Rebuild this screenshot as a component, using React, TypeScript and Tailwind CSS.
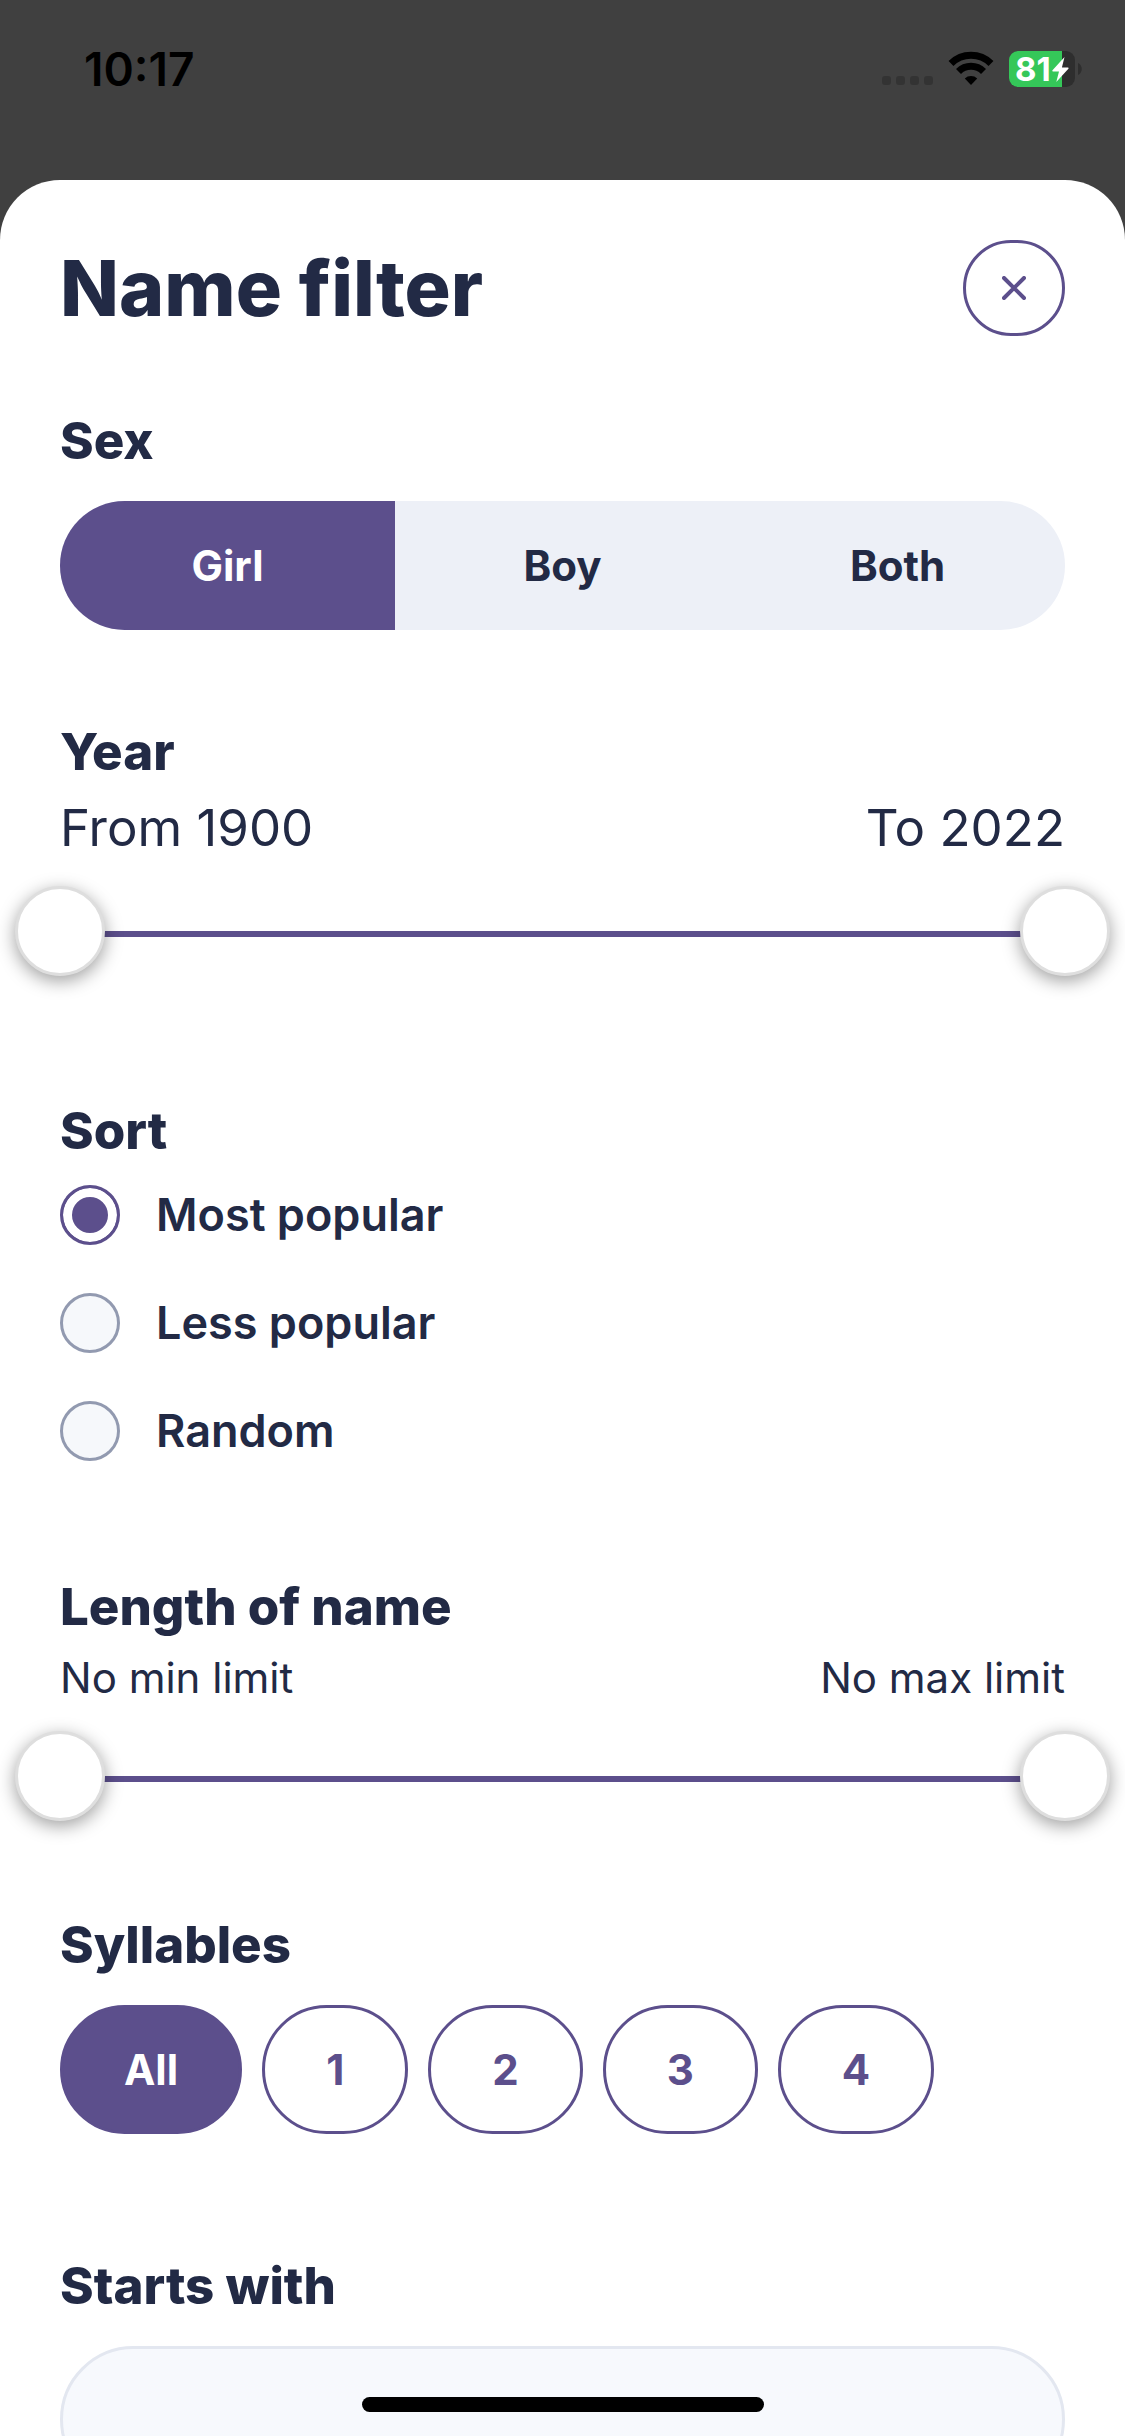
import { useState } from 'react'
import type { ReactNode } from 'react'

const SEXES = ['Girl', 'Boy', 'Both']
const SORTS = ['Most popular', 'Less popular', 'Random']
const SYLLABLES = ['All', '1', '2', '3', '4']

const YEAR_MIN = 1900
const YEAR_MAX = 2022
const LENGTH_MIN = 1
const LENGTH_MAX = 15

export default function App() {
  const [sex, setSex] = useState('Girl')
  const [sort, setSort] = useState('Most popular')
  const [syllables, setSyllables] = useState('All')
  const [years, setYears] = useState<[number, number]>([YEAR_MIN, YEAR_MAX])
  const [lengths, setLengths] = useState<[number, number]>([LENGTH_MIN, LENGTH_MAX])

  return (
    <div className="relative flex h-screen flex-col overflow-hidden bg-[#404040] font-['Inter',sans-serif] text-[#222a45]">
      <StatusBar />

      <main className="flex-1 overflow-y-auto rounded-t-[60px] bg-white px-[60px] pt-[60px] [scrollbar-width:none]">
        <header className="flex items-center justify-between">
          <h1 className="text-[77px] leading-[96px] font-extrabold">Name filter</h1>
          <button
            type="button"
            aria-label="Close"
            className="flex h-[96px] w-[102px] items-center justify-center rounded-full border-3 border-[#5c4f8c] text-[#5c4f8c]"
          >
            <svg width="24" height="24" viewBox="0 0 24 24" fill="none" stroke="currentColor" strokeWidth="4" strokeLinecap="round">
              <path d="M2 2l20 20M22 2L2 22" />
            </svg>
          </button>
        </header>

        <section className="mt-[75px]">
          <Heading>Sex</Heading>
          <div className="mt-[30px] flex h-[129px] overflow-hidden rounded-full bg-[#edf0f7]">
            {SEXES.map(s => (
              <button
                key={s}
                type="button"
                aria-pressed={sex === s}
                onClick={() => setSex(s)}
                className={`flex-1 text-[42px] leading-[50px] font-bold ${sex === s ? 'bg-[#5c4f8c] text-white' : ''}`}
              >
                {s}
              </button>
            ))}
          </div>
        </section>

        <section className="mt-[92px]">
          <Heading>Year</Heading>
          <div className="mt-4 flex justify-between text-[51px] leading-[60px]">
            <label htmlFor="year-from">From {years[0]}</label>
            <label htmlFor="year-to">To {years[1]}</label>
          </div>
          <RangeSlider ids={['year-from', 'year-to']} min={YEAR_MIN} max={YEAR_MAX} value={years} onChange={setYears} />
        </section>

        <section className="mt-[125px]">
          <Heading>Sort</Heading>
          <div className="mt-6 flex flex-col items-start gap-12">
            {SORTS.map(s => (
              <label key={s} className="flex h-[60px] items-center gap-9 text-[45px] leading-[60px] font-semibold">
                <input
                  type="radio"
                  name="sort"
                  checked={sort === s}
                  onChange={() => setSort(s)}
                  className="size-[60px] appearance-none rounded-full border-3 border-[#929ab0] bg-[#f6f8fb] checked:border-[#5c4f8c] checked:bg-[#5c4f8c] checked:shadow-[inset_0_0_0_9px_#fff]"
                />
                {s}
              </label>
            ))}
          </div>
        </section>

        <section className="mt-[116px]">
          <Heading>Length of name</Heading>
          <div className="mt-4 flex justify-between text-[42px] leading-[50px]">
            <label htmlFor="length-min">{lengths[0] === LENGTH_MIN ? 'No min limit' : `Min ${lengths[0]}`}</label>
            <label htmlFor="length-max">{lengths[1] === LENGTH_MAX ? 'No max limit' : `Max ${lengths[1]}`}</label>
          </div>
          <RangeSlider ids={['length-min', 'length-max']} min={LENGTH_MIN} max={LENGTH_MAX} value={lengths} onChange={setLengths} />
        </section>

        <section className="mt-[94px]">
          <Heading>Syllables</Heading>
          <div className="mt-[30px] flex gap-5">
            {SYLLABLES.map(s => (
              <button
                key={s}
                type="button"
                aria-pressed={syllables === s}
                onClick={() => setSyllables(s)}
                className={`h-[129px] rounded-full border-3 border-[#5c4f8c] px-[61px] text-[42px] leading-[50px] font-bold ${syllables === s ? 'bg-[#5c4f8c] text-white' : 'text-[#5c4f8c]'}`}
              >
                {s}
              </button>
            ))}
          </div>
        </section>

        <section className="mt-[122px] pb-24">
          <label htmlFor="starts-with" className="block text-[51px] leading-[60px] font-extrabold">Starts with</label>
          <input
            id="starts-with"
            type="text"
            className="mt-[30px] block h-[147px] w-full rounded-full border-3 border-[#e3e7f0] bg-[#f7f9fd] px-[60px] text-[45px] outline-none"
          />
        </section>
      </main>

      {/* home indicator */}
      <div className="absolute bottom-6 left-1/2 h-[15px] w-[402px] -translate-x-1/2 rounded-full bg-black" />
    </div>
  )
}

function Heading({ children }: { children: ReactNode }) {
  return <h2 className="text-[51px] leading-[60px] font-extrabold">{children}</h2>
}

const THUMB =
  'pointer-events-none absolute inset-y-0 -left-[45px] m-0 h-[90px] w-[calc(100%+90px)] appearance-none bg-transparent outline-none [&::-webkit-slider-thumb]:pointer-events-auto [&::-webkit-slider-thumb]:size-[90px] [&::-webkit-slider-thumb]:appearance-none [&::-webkit-slider-thumb]:rounded-full [&::-webkit-slider-thumb]:border-3 [&::-webkit-slider-thumb]:border-[#dedede] [&::-webkit-slider-thumb]:bg-white [&::-webkit-slider-thumb]:shadow-[0_5px_18px_rgba(0,0,0,0.38)]'

// Two native range inputs share one track, only the thumbs take the pointer
function RangeSlider({ ids, min, max, value, onChange }: {
  ids: [string, string]
  min: number
  max: number
  value: [number, number]
  onChange: (v: [number, number]) => void
}) {
  const pct = (n: number) => ((n - min) / (max - min)) * 100
  return (
    <div className="relative mt-7 h-[90px]">
      <div className="absolute inset-x-0 top-1/2 h-[6px] bg-[#edf0f7]" />
      <div
        className="absolute top-1/2 h-[6px] bg-[#5c4f8c]"
        style={{ left: `${pct(value[0])}%`, right: `${100 - pct(value[1])}%` }}
      />
      <input
        id={ids[0]}
        type="range"
        min={min}
        max={max}
        value={value[0]}
        onChange={e => onChange([Math.min(Number(e.target.value), value[1]), value[1]])}
        className={THUMB}
      />
      <input
        id={ids[1]}
        type="range"
        min={min}
        max={max}
        value={value[1]}
        onChange={e => onChange([value[0], Math.max(Number(e.target.value), value[0])])}
        className={THUMB}
      />
    </div>
  )
}

function StatusBar() {
  return (
    <div className="flex h-[180px] shrink-0 items-start justify-between pt-[42px] pr-[43px] pl-[84px] text-black">
      <span className="text-[46px] leading-[54px] font-semibold">10:17</span>
      <div className="flex h-[54px] items-center">
        <svg width="51" height="36" viewBox="0 0 51 36" fill="#333333">
          <rect x="0" y="25" width="9" height="9" rx="3" />
          <rect x="14" y="25" width="9" height="9" rx="3" />
          <rect x="28" y="25" width="9" height="9" rx="3" />
          <rect x="42" y="25" width="9" height="9" rx="3" />
        </svg>
        <svg className="ml-[15px]" width="46" height="36" viewBox="0 0 46 36" fill="none" stroke="currentColor">
          <path d="M3 12.5a28.500 28.500 0 0 1 40 0" strokeWidth="7" />
          <path d="M10.500 20.500a17.500 17.500 0 0 1 25 0" strokeWidth="7" />
          <path d="M23 34l-6.200-6.600a9 9 0 0 1 12.400 0z" fill="currentColor" stroke="none" />
        </svg>
        <div className="relative ml-[15px] flex h-9 w-[66px] items-center rounded-[9px] bg-[#2e2e2e] pl-[6px] text-white">
          <div className="absolute inset-y-0 left-0 w-[53px] rounded-l-[9px] bg-[#35c759]" />
          <span className="relative text-[33px] leading-10 font-bold">81</span>
          <svg className="absolute top-[6px] right-[6px]" width="17" height="25" viewBox="0 0 17 25" fill="currentColor">
            <path d="M12.500 0L0.500 13.200q-.6 1 .5 1.200h6L4.300 25L16.400 11.700q.6-1-.5-1.200h-6z" />
          </svg>
        </div>
        <svg className="ml-[3px]" width="4" height="12" viewBox="0 0 4 12" fill="#2e2e2e">
          <path d="M0 0c5 2 5 10 0 12z" />
        </svg>
      </div>
    </div>
  )
}
